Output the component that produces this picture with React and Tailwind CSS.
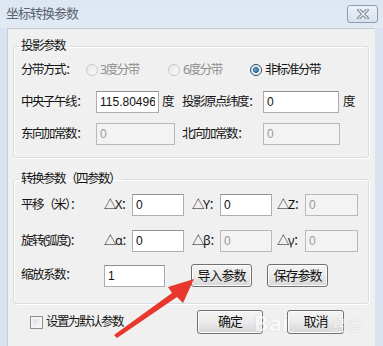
import React from "react";

const Radio = ({ checked, disabled }) => (
  <span
    className={`flex h-[12px] w-[12px] shrink-0 items-center justify-center rounded-full border ${
      disabled
        ? "border-[#c8c8c8] bg-gradient-to-br from-[#e6e6e6] to-[#fafafa]"
        : "border-[#2c4d6c] bg-gradient-to-br from-[#d8dde2] to-[#ffffff]"
    }`}
  >
    {checked && (
      <span className="h-[6px] w-[6px] rounded-full border border-[#1c4e78] bg-gradient-to-br from-[#7fc2f2] to-[#1b6bb0]" />
    )}
  </span>
);

const Field = ({ value, width, disabled }) => (
  <input
    readOnly
    value={value}
    className={`h-[22px] shrink-0 border px-[3px] font-['Liberation_Sans',sans-serif] text-[12px] tracking-normal outline-none ${width} ${
      disabled
        ? "border-[#b9b9b9] bg-[#f3f3f3] text-[#9a9a9a]"
        : "border-[#abadb3] border-t-[#8e9096] bg-white text-[#111]"
    }`}
  />
);

const Btn = ({ children, width }) => (
  <button
    className={`h-[23px] shrink-0 rounded-[3px] border border-[#707070] bg-gradient-to-b from-[#f4f4f4] via-[#ebebeb] to-[#d6d6d6] text-[13px] tracking-[-1px] text-[#111] shadow-[inset_0_0_0_1px_#fcfcfc] ${width}`}
  >
    {children}
  </button>
);

const Delta = ({ children }) => (
  <span className="w-[28px] shrink-0 whitespace-nowrap">{children}</span>
);

export default function App() {
  return (
    <div className="relative h-[346px] w-[383px] overflow-hidden bg-[#d9e3ef] font-['Noto_Sans','Noto_Sans_CJK_SC',sans-serif] text-[12.5px] text-[#141414]">
      {/* 标题栏 */}
      <div className="flex h-[28px] items-start justify-between bg-gradient-to-b from-[#dce6f2] to-[#e2eaf4] pl-[6px] pr-[5px]">
        <span className="mt-[4px] text-[13px] tracking-[-1px] text-[#5a6470]">坐标转换参数</span>
        <div className="mt-[5px] flex h-[18px] w-[31px] items-center justify-center rounded-[3px] border border-[#8d9cb0] bg-gradient-to-b from-[#eef2f7] to-[#d6e0ec]">
          <svg width="12" height="10" viewBox="0 0 12 10">
            <path d="M2 1 L10 9 M10 1 L2 9" stroke="#6d7887" strokeWidth="3.2" strokeLinecap="square" />
            <path d="M2 1 L10 9 M10 1 L2 9" stroke="#f4f6f9" strokeWidth="1.4" strokeLinecap="square" />
          </svg>
        </div>
      </div>

      {/* 客户区 */}
      <div className="ml-[7px] mr-[8px] h-[318px] border-l border-t border-[#c3cdd9] bg-[#f0f0f0] pt-[8px] tracking-[-1.5px]">
        {/* 投影参数 */}
        <fieldset className="ml-[5px] w-[356px] rounded-[3px] border border-[#d5dfe5] pb-[12px] pl-[7px] shadow-[inset_1px_1px_0_#fff,1px_1px_0_#fff]">
          <legend className="-ml-[2px] px-[2px] leading-[18px]">投影参数</legend>
          <div className="flex flex-col gap-[10px] pt-[4px]">
            <div className="flex h-[22px] items-center">
              <span className="w-[65px] shrink-0">分带方式：</span>
              <div className="flex w-[82px] items-center gap-[2px] text-[#8f8f8f]">
                <Radio disabled />
                <span>3度分带</span>
              </div>
              <div className="flex w-[82px] items-center gap-[3px] text-[#8f8f8f]">
                <Radio disabled />
                <span>6度分带</span>
              </div>
              <div className="flex items-center gap-[3px]">
                <Radio checked />
                <span>非标准分带</span>
              </div>
            </div>
            <div className="flex h-[22px] items-center">
              <span className="w-[75px] shrink-0">中央子午线：</span>
              <Field value="115.804968" width="w-[63px]" />
              <span className="ml-[3px] w-[20px] shrink-0">度</span>
              <span className="w-[81px] shrink-0">投影原点纬度：</span>
              <Field value="0" width="w-[76px]" />
              <span className="ml-[4px]">度</span>
            </div>
            <div className="flex h-[22px] items-center">
              <span className="w-[75px] shrink-0">东向加常数：</span>
              <Field value="0" width="w-[79px]" disabled />
              <span className="ml-[7px] w-[81px] shrink-0">北向加常数：</span>
              <Field value="0" width="w-[77px]" disabled />
            </div>
          </div>
        </fieldset>

        {/* 转换参数 */}
        <fieldset className="ml-[5px] mt-[12px] w-[356px] rounded-[3px] border border-[#d5dfe5] pb-[16px] pl-[7px] shadow-[inset_1px_1px_0_#fff,1px_1px_0_#fff]">
          <legend className="-ml-[2px] px-[2px] leading-[18px]">转换参数（四参数）</legend>
          <div className="flex flex-col pt-[6px]">
            <div className="flex h-[22px] items-center">
              <span className="w-[83px] shrink-0">平移（米）：</span>
              <Delta>△X：</Delta>
              <Field value="0" width="w-[52px]" />
              <span className="ml-[8px]" />
              <Delta>△Y：</Delta>
              <Field value="0" width="w-[52px]" />
              <span className="ml-[5px]" />
              <Delta>△Z：</Delta>
              <Field value="0" width="w-[53px]" disabled />
            </div>
            <div className="mt-[14px] flex h-[22px] items-center">
              <span className="w-[83px] shrink-0">旋转(弧度)：</span>
              <Delta>△α：</Delta>
              <Field value="0" width="w-[52px]" />
              <span className="ml-[8px]" />
              <Delta>△β：</Delta>
              <Field value="0" width="w-[52px]" disabled />
              <span className="ml-[5px]" />
              <Delta>△γ：</Delta>
              <Field value="0" width="w-[53px]" disabled />
            </div>
            <div className="mt-[12px] flex h-[23px] items-center">
              <span className="w-[83px] shrink-0">缩放系数：</span>
              <Field value="1" width="w-[61px]" />
              <span className="ml-[26px]" />
              <Btn width="w-[61px]">导入参数</Btn>
              <span className="ml-[15px]" />
              <Btn width="w-[61px]">保存参数</Btn>
            </div>
          </div>
        </fieldset>

        {/* 底部 */}
        <div className="mt-[6px] flex h-[24px] items-center">
          <span className="ml-[22px] h-[13px] w-[13px] border border-[#8e8f8f] bg-gradient-to-br from-[#dcdcdc] to-[#fbfbfb] shadow-[inset_0_0_0_2px_#f4f4f4]" />
          <span className="ml-[3px]">设置为默认参数</span>
          <span className="ml-[74px]" />
          <Btn width="w-[66px] h-[24px]">确定</Btn>
          <span className="ml-[24px]" />
          <Btn width="w-[57px] h-[24px]">取消</Btn>
        </div>
      </div>

      {/* 水印 */}
      <div className="pointer-events-none absolute left-[254px] top-[311px] flex items-end gap-[44px] text-white opacity-60 [text-shadow:0_0_1px_#a8a8a8]">
        <span className="text-[22px] font-bold leading-none">Bai</span>
        <span className="text-[15px] leading-none">经验</span>
      </div>

      {/* 红色箭头 */}
      <svg className="pointer-events-none absolute left-0 top-0" width="383" height="346">
        <polygon points="114,335 172,293 168,287 194,279 183,303 177,297 117,338" fill="#e8382e" />
      </svg>
    </div>
  );
}
